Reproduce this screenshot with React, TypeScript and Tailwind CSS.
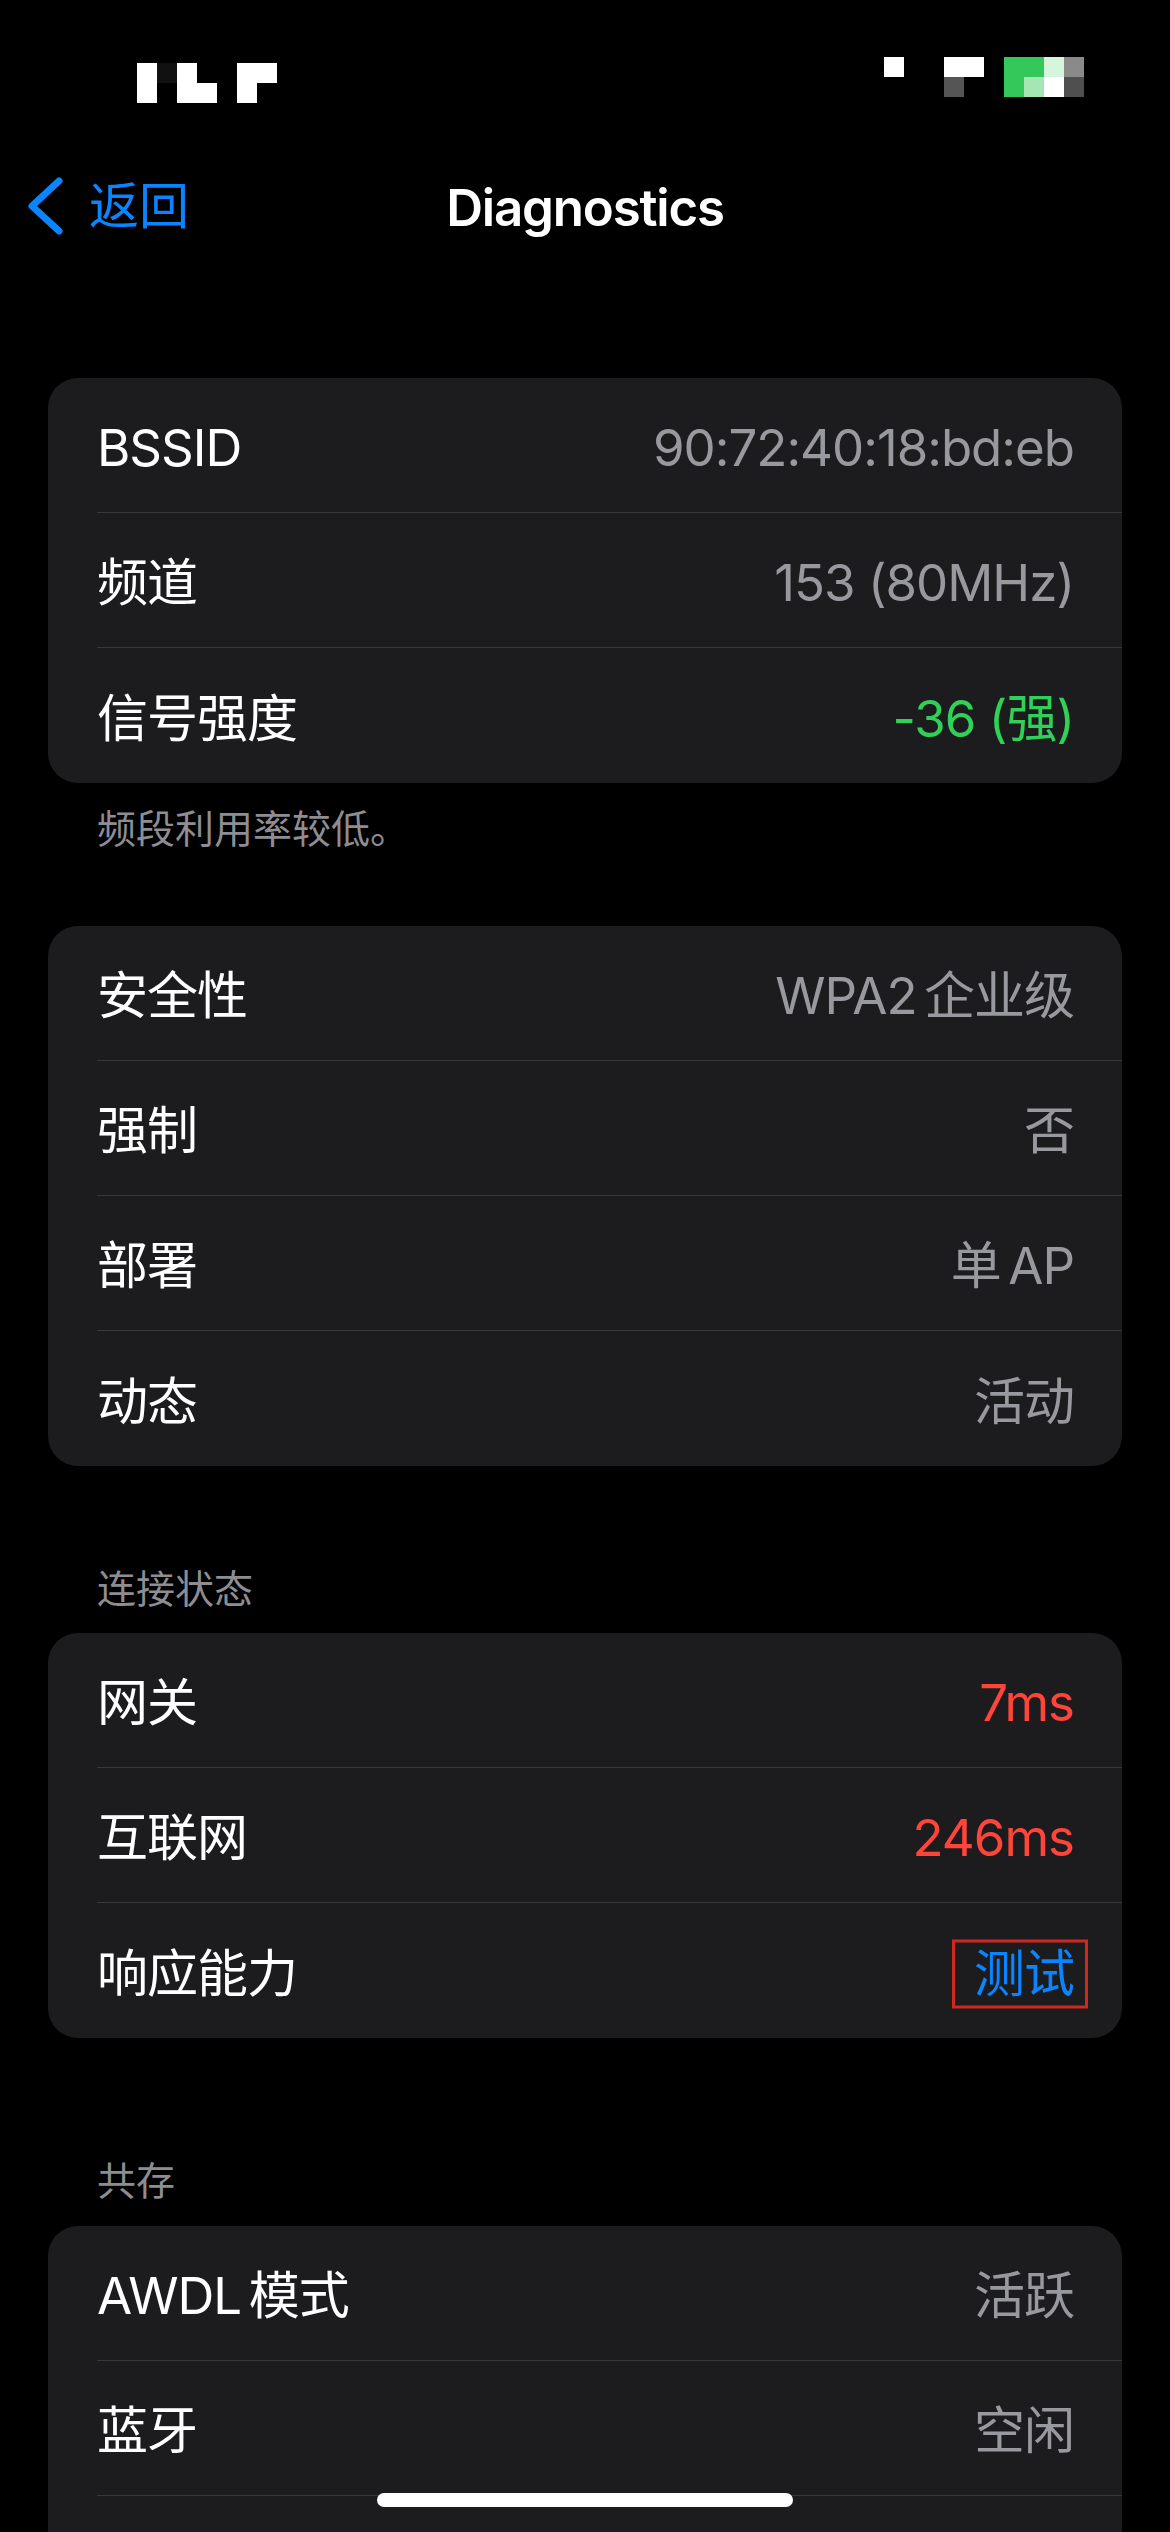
import React from 'react';

type Tone = 'gray' | 'green' | 'red' | 'blue';

interface Row {
  label: string;
  value: string;
  tone?: Tone;
  boxed?: boolean;
}

const toneClass: Record<Tone, string> = {
  gray: 'text-[#98989f]',
  green: 'text-[#30d158]',
  red: 'text-[#ff453a]',
  blue: 'text-[#0a84ff]',
};

// pixelated status bar, cell colours row by row
const leftCells = [
  ['bg-white', 'bg-[#111111]', 'bg-white', '', '', 'bg-white', 'bg-white'],
  ['bg-white', '', 'bg-white', 'bg-white', '', 'bg-white', ''],
];
const rightCells = [
  ['bg-white', '', '', 'bg-white', 'bg-white', '', 'bg-[#34c759]', 'bg-[#34c759]', 'bg-[#d6f5dd]', 'bg-[#8a8a8a]'],
  ['', '', '', 'bg-[#555555]', '', '', 'bg-[#34c759]', 'bg-[#a6e6b4]', 'bg-white', 'bg-[#4f4f4f]'],
];

const PixelBlock: React.FC<{ cells: string[][] }> = ({ cells }) => (
  <div className="flex flex-col">
    {cells.map((row, i) => (
      <div key={i} className="flex h-[20px]">
        {row.map((c, j) => (
          <div key={j} className={`w-[20px] h-[20px] ${c}`} />
        ))}
      </div>
    ))}
  </div>
);

const Card: React.FC<{ rows: Row[] }> = ({ rows }) => (
  <div className="mx-[48px] rounded-[30px] bg-[#1c1c1e] overflow-hidden tracking-[-1px]">
    {rows.map((row, i) => (
      <div key={i} className="pl-[49px]">
        <div
          className={`h-[135px] flex items-center justify-between pt-[6px] pr-[48px] ${
            i < rows.length - 1 ? 'border-b border-[#38383a]' : ''
          }`}
        >
          <span className="text-white">{row.label}</span>
          {row.boxed ? (
            <span className={`relative ${toneClass[row.tone ?? 'gray']}`}>
              {row.value}
              <span className="absolute -left-[22px] -right-[14px] top-1/2 -translate-y-1/2 h-[69px] border-[3px] border-[#d0281e]" />
            </span>
          ) : (
            <span className={toneClass[row.tone ?? 'gray']}>{row.value}</span>
          )}
        </div>
      </div>
    ))}
  </div>
);

const SectionText: React.FC<{ text: string; className?: string }> = ({ text, className = '' }) => (
  <div className={`pl-[97px] text-[39px] leading-[48px] text-[#8d8d93] ${className}`}>{text}</div>
);

export default function App() {
  return (
    <div
      className="relative w-[1170px] h-[2532px] overflow-hidden bg-black text-[51px] leading-[60px]"
      style={{ fontFamily: 'Inter, "Noto Sans CJK SC", sans-serif' }}
    >
      {/* status bar */}
      <div className="h-[150px] flex justify-between pl-[137px] pr-[86px]">
        <div className="pt-[63px]">
          <PixelBlock cells={leftCells} />
        </div>
        <div className="pt-[57px]">
          <PixelBlock cells={rightCells} />
        </div>
      </div>

      {/* nav bar */}
      <div className="h-[112px] grid grid-cols-[1fr_auto_1fr] items-center">
        <div className="flex items-center pl-[24px] text-[#0a84ff]">
          <svg width="42" height="68" viewBox="0 0 42 68" fill="none">
            <path d="M35 9 L8 34 L35 59" stroke="#0a84ff" strokeWidth="7" strokeLinecap="round" strokeLinejoin="round" />
          </svg>
          <span className="ml-[23px] text-[50px]">返回</span>
        </div>
        <div className="text-white font-semibold text-[51px] tracking-[-1.2px] pt-[3px]">Diagnostics</div>
        <div />
      </div>

      <div className="pt-[116px]">
        <Card
          rows={[
            { label: 'BSSID', value: '90:72:40:18:bd:eb' },
            { label: '频道', value: '153 (80MHz)' },
            { label: '信号强度', value: '-36 (强)', tone: 'green' },
          ]}
        />
        <SectionText text="频段利用率较低。" className="mt-[22px]" />

        <div className="mt-[73px]">
          <Card
            rows={[
              { label: '安全性', value: 'WPA2\u2006企业级' },
              { label: '强制', value: '否' },
              { label: '部署', value: '单\u2006AP' },
              { label: '动态', value: '活动' },
            ]}
          />
        </div>

        <SectionText text="连接状态" className="mt-[99px]" />
        <div className="mt-[20px]">
          <Card
            rows={[
              { label: '网关', value: '7ms', tone: 'red' },
              { label: '互联网', value: '246ms', tone: 'red' },
              { label: '响应能力', value: '测试', tone: 'blue', boxed: true },
            ]}
          />
        </div>

        <SectionText text="共存" className="mt-[119px]" />
        <div className="mt-[21px]">
          <Card
            rows={[
              { label: 'AWDL\u2006模式', value: '活跃' },
              { label: '蓝牙', value: '空闲' },
              { label: '', value: '' },
            ]}
          />
        </div>
      </div>

      {/* home indicator */}
      <div className="absolute left-[377px] top-[2493px] w-[416px] h-[14px] rounded-full bg-white" />
    </div>
  );
}
